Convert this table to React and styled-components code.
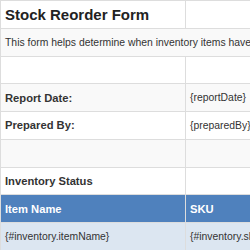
import React from "react";
import styled, { createGlobalStyle } from "styled-components";

const Global = createGlobalStyle`
  html, body {
    margin: 0;
    padding: 0;
    background: #ffffff;
    overflow: hidden;
  }
  body {
    font-family: "Liberation Sans", Arial, sans-serif;
    color: #333333;
  }
`;

const Sheet = styled.table`
  border-collapse: collapse;
  table-layout: fixed;
  width: 400px;
  font-family: "Liberation Sans", Arial, sans-serif;
`;

const Row = styled.tr`
  height: 27.75px;
  background: ${(p) =>
    p.$kind === "head"
      ? "#4f81bd"
      : p.$kind === "data"
      ? "#dce6f1"
      : p.$striped
      ? "#f9f9f9"
      : "#ffffff"};
`;

const Cell = styled.td`
  border: 1px solid #dddddd;
  padding: 0 4px;
  white-space: nowrap;
  overflow: hidden;
  vertical-align: middle;
  font-size: ${(p) => (p.$title ? "15px" : p.$bold ? "11.2px" : "10.4px")};
  font-weight: ${(p) => (p.$title || p.$bold ? 700 : 400)};
  color: ${(p) => (p.$head ? "#ffffff" : p.$title ? "#222222" : "#333333")};
`;

export default function App() {
  return (
    <>
      <Global />
      <Sheet>
        <colgroup>
          <col style={{ width: 185 }} />
          <col style={{ width: 215 }} />
        </colgroup>
        <tbody>
          <Row>
            <Cell $title>Stock Reorder Form</Cell>
            <Cell />
          </Row>
          <Row $striped>
            <Cell colSpan={2}>
              This form helps determine when inventory items have reached their reorder point.
            </Cell>
          </Row>
          <Row>
            <Cell />
            <Cell />
          </Row>
          <Row $striped>
            <Cell $bold>Report Date:</Cell>
            <Cell>{"{reportDate}"}</Cell>
          </Row>
          <Row>
            <Cell $bold>Prepared By:</Cell>
            <Cell>{"{preparedBy}"}</Cell>
          </Row>
          <Row $striped>
            <Cell />
            <Cell />
          </Row>
          <Row>
            <Cell $bold>Inventory Status</Cell>
            <Cell />
          </Row>
          <Row $kind="head">
            <Cell $bold $head>Item Name</Cell>
            <Cell $bold $head>SKU</Cell>
          </Row>
          <Row $kind="data">
            <Cell>{"{#inventory.itemName}"}</Cell>
            <Cell>{"{#inventory.sku}"}</Cell>
          </Row>
        </tbody>
      </Sheet>
    </>
  );
}
